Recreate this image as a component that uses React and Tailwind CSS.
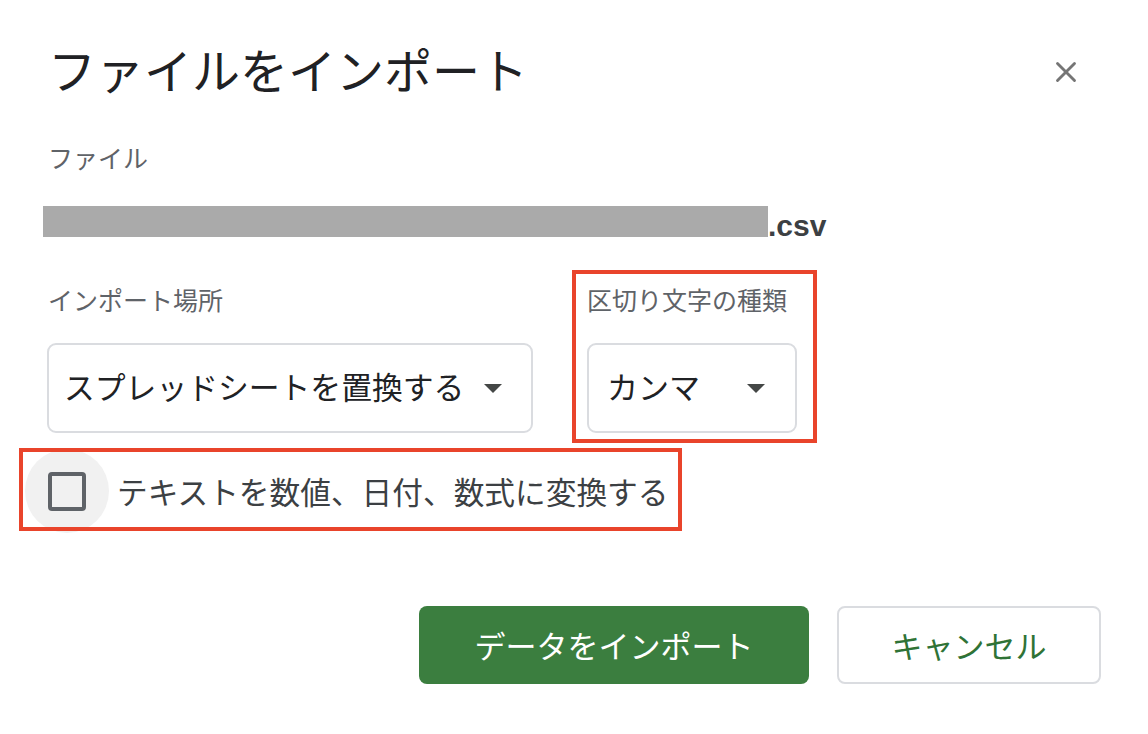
import { X } from 'lucide-react'

function Caret() {
  return (
    <svg width="18" height="9" viewBox="0 0 18 9" className="shrink-0">
      <polygon points="0,0 18,0 9,9" fill="#444746" />
    </svg>
  )
}

export default function App() {
  return (
    <div className="w-[1148px] h-[734px] bg-white overflow-hidden font-['Noto_Sans_CJK_JP','Noto_Sans',sans-serif]">
      <div className="pl-[48px] pr-[47px]">

        {/* Header */}
        <div className="flex justify-between items-start">
          <h1 className="mt-[44px] text-[48px] leading-[48px] text-[#202124] font-normal">ファイルをインポート</h1>
          <X size={34} strokeWidth={2} className="text-[#757575] mt-[55px] mr-[18px]" />
        </div>

        {/* File */}
        <div className="mt-[53px] text-[25px] leading-[25px] text-[#5f6368]">ファイル</div>
        <div className="mt-[36px] -ml-[5px] flex items-end h-[31px]">
          <div className="w-[725px] h-[31px] bg-[#aaaaaa]" />
          <span className="font-['Liberation_Sans',sans-serif] font-bold text-[30px] leading-[30px] text-[#3c4043] -mb-[4px]">.csv</span>
        </div>

        {/* Location + delimiter */}
        <div className="mt-[50px] -ml-[1px] flex gap-[54px]">
          <div className="flex flex-col">
            <div className="ml-[1px] text-[25px] leading-[25px] text-[#5f6368]">インポート場所</div>
            <div className="mt-[31px] w-[486px] h-[90px] border-2 border-[#dadce0] rounded-[9px] flex items-center justify-between pl-[15px] pr-[29px]">
              <span className="text-[30.8px] -mt-[3px] text-[#202124]">スプレッドシートを置換する</span>
              <Caret />
            </div>
          </div>
          <div className="relative flex flex-col">
            <span className="absolute left-[-15px] top-[-17px] w-[245px] h-[173px] border-4 border-[#e9442b]" />
            <div className="text-[25px] leading-[25px] text-[#5f6368]">区切り文字の種類</div>
            <div className="mt-[31px] w-[210px] h-[90px] border-2 border-[#dadce0] rounded-[9px] flex items-center justify-between pl-[18px] pr-[30px]">
              <span className="text-[31px] -mt-[3px] text-[#202124]">カンマ</span>
              <Caret />
            </div>
          </div>
        </div>

        {/* Checkbox */}
        <div className="relative mt-[16px] -ml-[23px] w-fit flex items-center gap-[8px]">
          <span className="absolute left-[-6px] top-[-1px] w-[663px] h-[83px] border-4 border-[#e9442b]" />
          <div className="w-[84px] h-[84px] rounded-full bg-[#f1f1f1] flex items-center justify-center">
            <div className="w-[38px] h-[39px] border-[4px] border-[#5f6368] rounded-[4px]" />
          </div>
          <span className="text-[30.7px] text-[#3c4043]">テキストを数値、日付、数式に変換する</span>
        </div>

        {/* Buttons */}
        <div className="mt-[73px] flex justify-end gap-[28px]">
          <button className="w-[390px] h-[78px] rounded-[8px] bg-[#3b7e3f] text-white text-[31px]">データをインポート</button>
          <button className="w-[264px] h-[78px] rounded-[8px] border-2 border-[#dadce0] bg-white text-[#2f7336] text-[31px]">キャンセル</button>
        </div>
      </div>
    </div>
  )
}
